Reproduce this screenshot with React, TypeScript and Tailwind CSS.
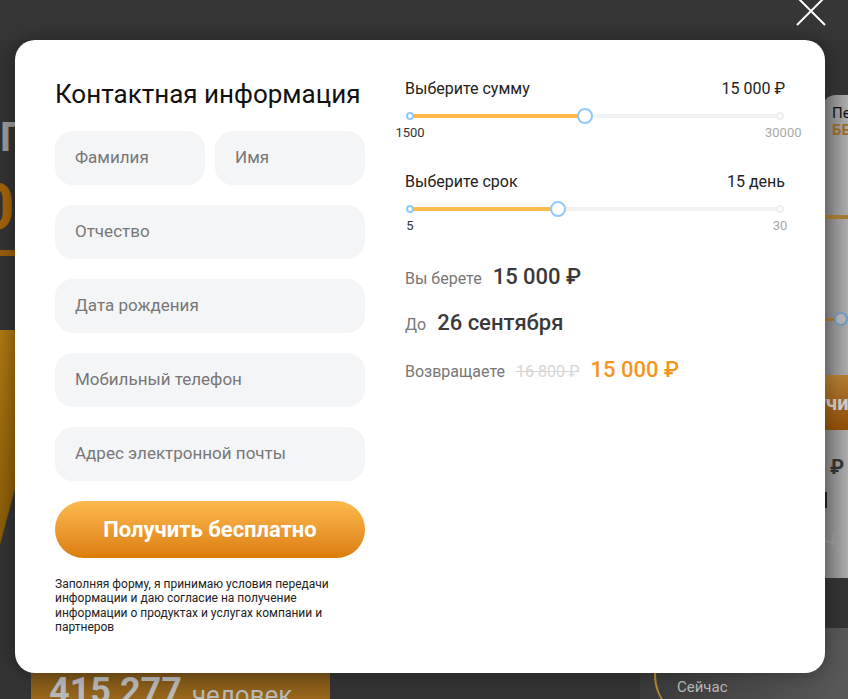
import React from 'react';

const font = { fontFamily: 'Roboto, "Noto Sans", sans-serif' };

function Slider({
  label,
  value,
  min,
  max,
  current,
  lo,
  hi,
}: {
  label: string;
  value: string;
  min: string;
  max: string;
  current: number;
  lo: number;
  hi: number;
}) {
  const pct = ((current - lo) / (hi - lo)) * 100;
  return (
    <div className="flex flex-col">
      <div className="flex items-center justify-between text-[16px] leading-[18px] text-[#222]">
        <span>{label}</span>
        <span>{value}</span>
      </div>
      <div className="relative mx-[5px] mt-[16px] h-[4px] rounded-full bg-[#f2f2f2]">
        <div className="absolute left-0 top-0 h-full rounded-full bg-[#fdbb4b]" style={{ width: `${pct}%` }} />
        <div className="absolute left-[-4px] top-[-2px] h-[8px] w-[8px] rounded-full border-2 border-[#90caf9] bg-white" />
        <div className="absolute right-[-4px] top-[-2px] h-[8px] w-[8px] rounded-full border-2 border-[#f0f0f0] bg-white" />
        <div
          className="absolute top-[-6px] h-[16px] w-[16px] -translate-x-1/2 rounded-full border-2 border-[#90caf9] bg-white"
          style={{ left: `${pct}%` }}
        />
      </div>
      <div className="mt-[7px] flex justify-between text-[13px] leading-[16px]">
        <span className="w-[10px] text-center text-[#333]">
          <span className="inline-block -translate-x-[10px] w-[30px]">{min}</span>
        </span>
        <span className="w-[10px] text-center text-[#aaa]">
          <span className="inline-block -translate-x-[10px] w-[30px]">{max}</span>
        </span>
      </div>
    </div>
  );
}

function Field({ text, className = '' }: { text: string; className?: string }) {
  return (
    <div className={`flex h-[54px] items-center rounded-[18px] bg-[#f4f5f7] pl-[20px] text-[17px] text-[#777] ${className}`}>
      {text}
    </div>
  );
}

export default function App() {
  return (
    <div className="relative h-[699px] w-[848px] overflow-hidden bg-[#333333]" style={font}>
      {/* page under the overlay */}
      <div className="absolute inset-0">
        <div className="absolute left-0 top-0 h-[40px] w-full bg-[#363636]" />
        <div className="absolute left-0 top-[118px] text-[40px] font-bold leading-[40px] text-[#9a9a9a]">П</div>
        <div className="absolute left-[-22px] top-[176px] text-[64px] font-bold leading-[64px] text-[#a0620a]">0</div>
        <div className="absolute left-0 top-[250px] h-[6px] w-[20px] bg-[#9a5b0c]" />
        <div className="absolute left-[-40px] top-[330px] h-[280px] w-[60px] skew-x-[-15deg] bg-gradient-to-r from-[#b07a12] to-[#8a5c08]" />
        <div className="absolute left-[822px] top-[95px] h-[483px] w-[60px] rounded-tl-[14px] bg-gradient-to-r from-[#7d7d7d] via-[#b3b3b3] to-[#b3b3b3]">
          <div className="pl-[10px] pt-[10px] text-[15px] leading-[17px] text-[#111]">Пе</div>
          <div className="pl-[10px] text-[15px] font-bold leading-[17px] text-[#9a6a2a]">БЕ</div>
          <div className="ml-0 mt-[76px] h-[4px] w-full bg-[#a57a33]" />
          <div className="relative mt-[99px] h-[3px] w-[14px] bg-[#a57a33]">
            <div className="absolute left-[12px] top-[-6px] h-[14px] w-[14px] rounded-full border-2 border-[#6f98c0] bg-[#b3b3b3]" />
          </div>
          <div className="mt-[54px] flex h-[55px] items-center bg-gradient-to-b from-[#b07d30] to-[#8f4d05] text-[20px] font-bold text-[#ccc]">
            <span className="ml-[-6px]">учи</span>
          </div>
          <div className="ml-[8px] mt-[22px] text-[20px] font-bold text-[#333]">₽</div>
          <div className="ml-[2px] mt-[10px] h-[16px] w-[3px] bg-[#222]" />
          <div className="ml-[-4px] mt-[22px] text-[15px] text-[#999] line-through">9 ₽</div>
        </div>
        <div className="absolute left-[640px] top-[628px] h-[71px] w-[220px] bg-gradient-to-r from-[#3a3a3a] to-[#5a5a5a]">
          <div className="absolute left-[14px] top-[2px] h-[90px] w-[90px] rounded-full border-l-2 border-[#b98a32]" />
          <div className="absolute left-[37px] top-[48px] text-[15px] text-[#bbb]">Сейчас</div>
        </div>
        <div className="absolute left-[31px] top-[673px] flex h-[40px] w-[299px] items-start bg-gradient-to-b from-[#7a5418] to-[#a9711e] pl-[18px]">
          <span className="mt-[-2px] text-[36px] font-bold leading-[40px] text-[#b8b8b8]">415 277</span>
          <span className="ml-[10px] mt-[2px] text-[26px] leading-[40px] text-[#b8b8b8]">человек</span>
        </div>
      </div>

      {/* close */}
      <svg className="absolute left-[793px] top-[-7px]" width="36" height="36" viewBox="0 0 36 36">
        <path d="M4 4 L32 32 M32 4 L4 32" stroke="#ffffff" strokeWidth="2" />
      </svg>

      {/* modal */}
      <div className="absolute left-[15px] top-[40px] flex h-[633px] w-[810px] gap-[40px] rounded-[20px] bg-white px-[40px] pt-[38px] shadow-[0_0_20px_rgba(0,0,0,0.35)]">
        <div className="flex w-[310px] flex-col">
          <h1 className="text-[26px] leading-[32px] text-[#111]">Контактная информация</h1>
          <div className="mt-[21px] flex flex-col gap-[20px]">
            <div className="flex gap-[10px]">
              <Field text="Фамилия" className="flex-1" />
              <Field text="Имя" className="flex-1" />
            </div>
            <Field text="Отчество" />
            <Field text="Дата рождения" />
            <Field text="Мобильный телефон" />
            <Field text="Адрес электронной почты" />
          </div>
          <button className="mt-[20px] h-[57px] rounded-full bg-gradient-to-b from-[#fdba4d] to-[#db7d08] text-[22px] font-bold text-white">
            Получить бесплатно
          </button>
          <p className="mt-[19px] text-[12px] leading-[14.3px] text-[#222]">
            Заполняя форму, я принимаю условия передачи информации и даю согласие на получение информации о продуктах и
            услугах компании и партнеров
          </p>
        </div>

        <div className="flex w-[380px] flex-col pt-[2px]">
          <Slider label="Выберите сумму" value="15 000 ₽" min="1500" max="30000" current={15000} lo={1500} hi={30000} />
          <div className="mt-[32px]">
            <Slider label="Выберите срок" value="15 день" min="5" max="30" current={15} lo={5} hi={30} />
          </div>
          <div className="mt-[26px] flex items-baseline gap-[11px]">
            <span className="text-[16px] text-[#777]">Вы берете</span>
            <span className="text-[22px] font-medium text-[#3a3a3a]">15 000 ₽</span>
          </div>
          <div className="mt-[13px] flex items-baseline gap-[11px]">
            <span className="text-[16px] text-[#777]">До</span>
            <span className="text-[22px] font-medium text-[#3a3a3a]">26 сентября</span>
          </div>
          <div className="mt-[14px] flex items-baseline gap-[11px]">
            <span className="text-[16px] text-[#777]">Возвращаете</span>
            <span className="text-[16px] text-[#d6d6d6] line-through">16 800 ₽</span>
            <span className="text-[22px] font-medium text-[#f7941d]">15 000 ₽</span>
          </div>
        </div>
      </div>
    </div>
  );
}
